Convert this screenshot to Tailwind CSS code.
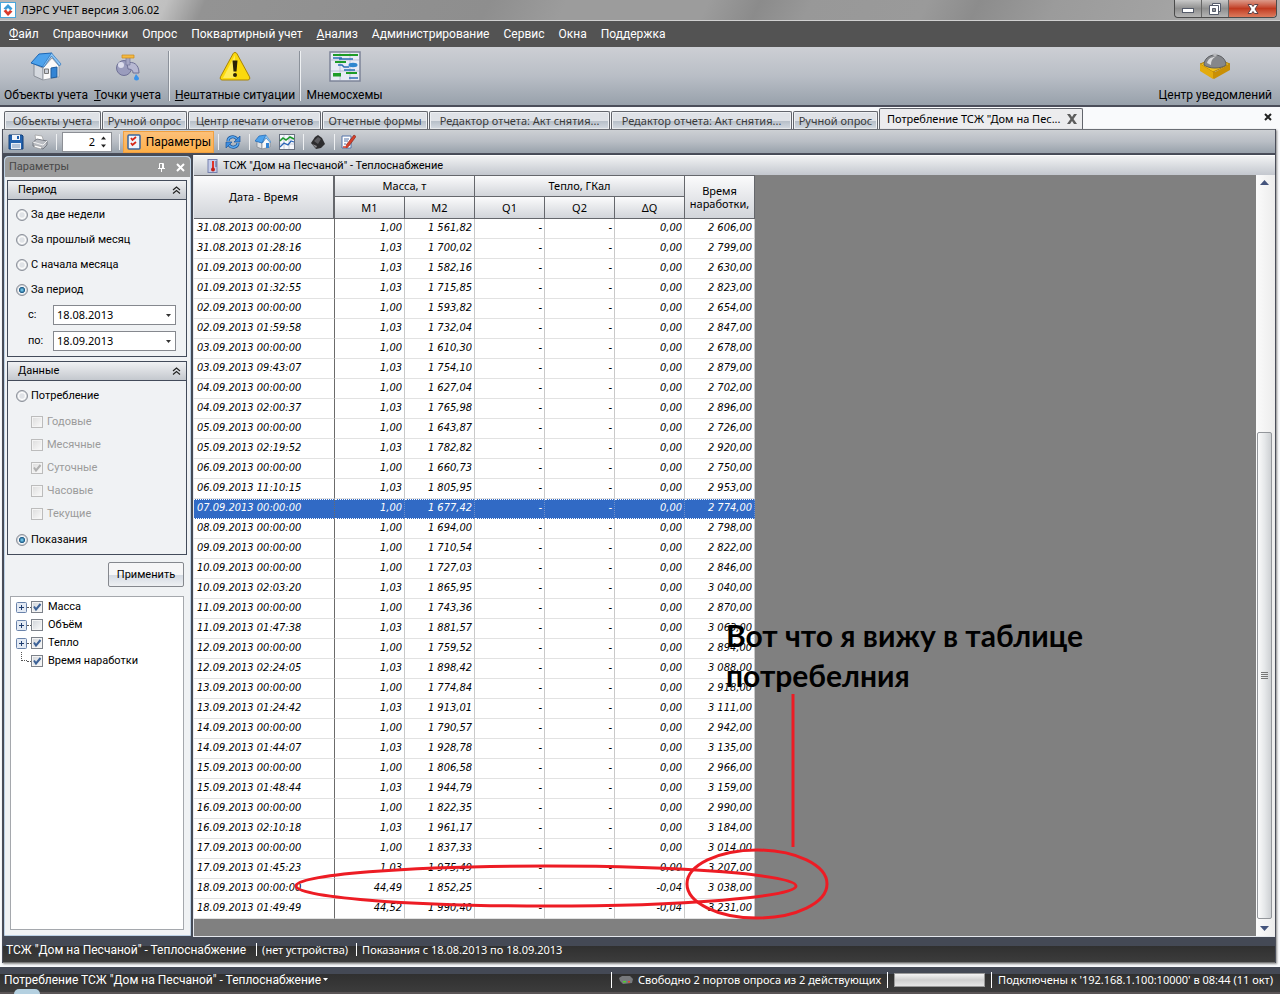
<!DOCTYPE html>
<html lang="ru">

<head>
    <meta charset="UTF-8">
    <meta name="viewport" content="width=device-width, initial-scale=1.0">
    <title>ЛЭРС УЧЕТ версия 3.06.02</title>
    <script src="https://cdn.jsdelivr.net/npm/@tailwindcss/browser@4"></script>
    <style>
        /* Classic desktop radio buttons and tick boxes */
        input[type="radio"] {
            appearance: none;
            flex: none;
            width: 12px;
            height: 12px;
            border: 1px solid #8b9099;
            border-radius: 50%;
            background: radial-gradient(circle, #e0e3e7 0 30%, #fdfdfd 50%, #c9cdd2 70%);
        }

        input[type="radio"]:checked {
            background: radial-gradient(circle, #6fc3e6 0 8%, #1d5c88 38%, #f4f6f8 50%, #c9cdd2 70%);
        }

        .tick {
            appearance: none;
            grid-area: 1 / 1;
            width: 12px;
            height: 12px;
            border: 1px solid #7d828a;
            background: linear-gradient(135deg, #cfd3d8, #fbfbfb);
            box-shadow: inset 0 0 0 1px #f4f4f4;
        }

        .tick:disabled {
            border-color: #bcbcbc;
            background: linear-gradient(135deg, #dcdcdc, #fbfbfb);
        }

        .tick + svg {
            grid-area: 1 / 1;
            display: none;
            pointer-events: none;
        }

        .tick:checked + svg {
            display: block;
        }
    </style>
</head>

<body class="bg-[#f9fafc] text-black text-[11px] leading-4 font-['Noto_Sans','Liberation_Sans',sans-serif]">
    <div class="min-h-screen flex flex-col">

        <!-- Title bar -->
        <header class="h-[21px] flex items-center border-b border-[#d0d0d0] bg-[linear-gradient(115deg,#b4b4b4_0%,#c6c6c6_10%,#c0c0c0_13%,#939393_16%,#8e8e8e_38%,#9c9c9c_44%,#9c9c9c_55%,#8b8b8b_59%,#989898_63%,#9a9a9a_72%,#8c8c8c_76%,#9b9b9b_82%,#a2a2a2_90%,#b0b0b0_100%)]">
            <svg class="w-4 h-4 shrink-0" viewBox="0 0 16 16">
                <rect x=".5" y=".5" width="15" height="15" fill="#fff" stroke="#4aa6dc" />
                <path d="M8 2l4.500 4.500-2 2L8 6 6 8 3.500 6.500z" fill="#3a9bd8" />
                <path d="M3.500 9L6 7.500 8 10l2-2 2.500 1.500L8 14z" fill="#d93a2b" />
            </svg>
            <h1 class="ml-[5px]">ЛЭРС УЧЕТ версия 3.06.02</h1>
            <div class="ml-auto mr-[3px] self-start flex h-[18px] rounded-b border border-t-0 border-[#4b4b4b]">
                <button aria-label="Свернуть" class="w-[27px] flex items-center justify-center border-r border-[#666] rounded-bl bg-linear-to-b from-[#c9c9c9] via-[#8f8f8f] to-[#b5b5b5]">
                    <svg class="w-3 h-3" viewBox="0 0 12 12"><rect x=".5" y="5.500" width="11" height="4" fill="#fff" stroke="#555b6a" /></svg>
                </button>
                <button aria-label="Восстановить" class="w-[27px] flex items-center justify-center border-r border-[#666] bg-linear-to-b from-[#c9c9c9] via-[#8f8f8f] to-[#b5b5b5]">
                    <svg class="w-3 h-3" viewBox="0 0 12 12">
                        <path d="M3.500 .5h8v8h-8z" fill="#fff" stroke="#555b6a" />
                        <path d="M.5 2.500h9v9h-9z" fill="#fff" stroke="#555b6a" />
                        <path d="M3.500 5.500h3v3h-3z" fill="#999" stroke="#555b6a" />
                    </svg>
                </button>
                <button aria-label="Закрыть" class="w-[47px] flex items-center justify-center rounded-br bg-linear-to-b from-[#dc9a8a] via-[#c03a20] to-[#dd7a5c]">
                    <svg class="w-3 h-3" viewBox="0 0 12 12">
                        <path d="M1 1.500h3.500L6 3.500l1.500-2H11L8 6l3 4.500H7.500L6 8.500l-1.500 2H1L4 6z" fill="#fff" stroke="#5b4148" />
                    </svg>
                </button>
            </div>
        </header>

        <!-- Menu -->
        <nav class="h-[26px] pl-[9px] flex items-center gap-[14px] bg-[#535353] text-white font-[Roboto] text-[12px]">
            <a href="#"><u>Ф</u>айл</a>
            <a href="#">Справочники</a>
            <a href="#">Опрос</a>
            <a href="#">Поквартирный учет</a>
            <a href="#"><u>А</u>нализ</a>
            <a href="#">Администрирование</a>
            <a href="#">Сервис</a>
            <a href="#">Окна</a>
            <a href="#">Поддержка</a>
        </nav>

        <!-- Large toolbar -->
        <div class="h-[60px] flex items-stretch border-b-2 border-[#4b4e5a] bg-linear-to-b from-[#cdcfd4] via-[#b9bec6] to-[#98a1ab] font-[Roboto] text-[12px] whitespace-nowrap">
            <button class="w-[92px] flex flex-col items-center gap-1 pt-1">
                <svg class="w-8 h-8" viewBox="0 0 32 32">
                    <path d="M4 13l9 4v12l-9-4z" fill="#d5d9df" stroke="#8a8f98" />
                    <path d="M13 17l9-10 7 8v11l-16 3z" fill="#fafafa" stroke="#9aa0a8" />
                    <path d="M1 12L9 3l13-1-9 14z" fill="#4da2ec" stroke="#1c66b4" />
                    <path d="M21.500 2l9.500 11-1.500 2-8-10L14 16l-1.500-.5z" fill="#8cc6f6" stroke="#2d74bb" stroke-width=".7" />
                    <path d="M21 17l6-1v10l-6 1z" fill="#3384d4" stroke="#1e5c9d" />
                    <path d="M14.500 18h4v4.500h-4z" fill="#c9ced6" stroke="#777" />
                </svg>
                <span>Объекты учета</span>
            </button>
            <button class="w-[71px] flex flex-col items-center gap-1 pt-1">
                <svg class="w-8 h-8" viewBox="0 0 32 32">
                    <circle cx="12" cy="17" r="7.500" fill="#9a9cbd" stroke="#6f7196" />
                    <circle cx="9" cy="14" r="3" fill="#dcddec" />
                    <path d="M15 12c6-2 12 1 12 10h-6c0-3-2-4-5-4z" fill="#b7b8d2" stroke="#6f7196" />
                    <path d="M14 6h4v8h-4z" fill="#a5a6c4" stroke="#73759b" stroke-width=".7" />
                    <path d="M10 4h12v3H10z" fill="#f4b942" stroke="#c98a1a" stroke-width=".7" />
                    <path d="M24 23l3 4a2.500 2.500 0 1 1-5 0z" fill="#3b93ea" />
                </svg>
                <span><u>Т</u>очки учета</span>
            </button>
            <i class="my-1 w-px mx-[6px] bg-[#eef0f2] shadow-[-1px_0_0_#8b919a]"></i>
            <button class="w-[118px] flex flex-col items-center gap-1 pt-1">
                <svg class="w-8 h-8" viewBox="0 0 32 32">
                    <path d="M16 1.500c1 0 1.600.5 2 1.300l12.500 23c.8 1.700 0 3.200-1.700 3.200H3.200C1.500 29 .7 27.500 1.500 25.800L14 2.800c.4-.8 1-1.300 2-1.300z" fill="#fbd90d" stroke="#a88306" />
                    <path d="M16 4L4 27h12z" fill="#fff27a" opacity=".7" />
                    <path d="M13.500 9.500h5l-1 11h-3z" fill="#2b2205" />
                    <circle cx="16" cy="24" r="2" fill="#2b2205" />
                </svg>
                <span><u>Н</u>ештатные ситуации</span>
            </button>
            <i class="my-1 w-px mx-[6px] bg-[#eef0f2] shadow-[-1px_0_0_#8b919a]"></i>
            <button class="w-[75px] flex flex-col items-center gap-1 pt-1">
                <svg class="w-8 h-8" viewBox="0 0 32 32">
                    <rect x="1" y="1" width="30" height="29" fill="#e8ebf5" stroke="#7d8498" stroke-width="1.500" />
                    <path d="M11 2v27M21 2v27M2 9h28M2 20h28" stroke="#bcc3d8" />
                    <path d="M4 4h25M6 11h11M17 22h11" stroke="#1e9c28" stroke-width="2" />
                    <path d="M4 7h9M10 8h14M9 14h4l2 2h5M15 19h11" fill="none" stroke="#2c6fb4" stroke-width="1.500" />
                    <ellipse cx="24" cy="14" rx="4.500" ry="2.200" fill="#2f86cf" />
                    <rect x="4" y="22" width="8" height="3.500" fill="#1e9c28" />
                    <path d="M20 27h9" stroke="#2c6fb4" stroke-width="1.500" />
                </svg>
                <span>Мнемосхемы</span>
            </button>
            <button class="ml-auto mr-2 flex flex-col items-center gap-1 pt-1">
                <svg class="w-8 h-8" viewBox="0 0 32 32">
                    <path d="M1 13l15 8 15-8v6l-16 9-14-9z" fill="#c98f06" />
                    <path d="M1 13l15-6 15 6-17 8z" fill="#f2c21b" stroke="#b58409" />
                    <path d="M1 13v7l13 8v-7z" fill="#e3ab0d" />
                    <path d="M5 14c0-6 5-10 11-10s11 4 11 10c-5 4-17 4-22 0z" fill="#85878b" stroke="#5c5e62" />
                    <path d="M8 12c1-4 4-6 8-6-3 2-4 4-4 8z" fill="#d9dadc" />
                    <circle cx="16" cy="4" r="1.800" fill="#b9babd" />
                </svg>
                <span>Центр уведомлений</span>
            </button>
        </div>

        <!-- Document tabs -->
        <div class="h-[22px] px-1 flex items-end whitespace-nowrap">
            <div id="tabs" class="flex items-end"></div>
            <div class="w-[204px] h-[21px] pl-[7px] pr-1 flex items-center justify-between border border-b-0 border-[#62656c] rounded-t-xs bg-[#ececee]">
                <span>Потребление ТСЖ "Дом на Пес...</span>
                <button aria-label="Закрыть вкладку">
                    <svg class="w-3 h-3" viewBox="0 0 12 12"><path d="M1 1h3l2 3 2-3h3L7.500 6l3.500 5H8L6 8l-2 3H1l3.500-5z" fill="#5d5d5d" /></svg>
                </button>
            </div>
            <button class="ml-auto mr-1 mb-2" aria-label="Закрыть документ">
                <svg class="w-2 h-2" viewBox="0 0 8 8"><path d="M1 1l6 6M7 1L1 7" stroke="#222" stroke-width="2" /></svg>
            </button>
        </div>

        <!-- Document window -->
        <main class="flex-1 ml-[2px] mr-1 flex flex-col border-x border-[#4b4e5a] bg-[#454b57] shadow-[1px_1px_2px_#888]">

            <div class="h-[25px] px-[5px] flex items-center border-y border-t-[#6b6e75] border-b-[#4b4e5a] bg-linear-to-b from-[#cdd0d4] via-[#b9bec5] to-[#98a1ab]">
                <button aria-label="Сохранить" class="mr-2">
                    <svg class="w-4 h-4" viewBox="0 0 16 16">
                        <path d="M1 1h13l1 1v13H1z" fill="#2362ae" stroke="#123f78" />
                        <path d="M4 1h8v5H4z" fill="#f4f6fa" /><path d="M9 2h2v3H9z" fill="#2362ae" />
                        <path d="M3 9h10v6H3z" fill="#e9eef6" /><path d="M4 11h8M4 13h8" stroke="#7d97bb" />
                    </svg>
                </button>
                <button aria-label="Печать" class="mr-2">
                    <svg class="w-4 h-4" viewBox="0 0 16 16">
                        <path d="M3 1l7 1 2 6-8-1z" fill="#fff" stroke="#999" stroke-width=".7" />
                        <path d="M1 8l4-3 10 2v4l-4 4-10-3z" fill="#b9bcc2" stroke="#666a72" stroke-width=".8" />
                        <path d="M1 8l10 3 4-4" fill="none" stroke="#f3f3f3" />
                        <path d="M3 11l7 2-1 2-7-2z" fill="#fff" stroke="#888" stroke-width=".5" />
                    </svg>
                </button>
                <i class="h-4 w-px mr-[5px] bg-[#eef0f2]"></i>
                <div class="w-[50px] h-5 mr-[7px] flex border border-[#8c8f95] bg-white">
                    <input type="text" value="2" aria-label="Масштаб" class="w-8 text-right outline-none">
                    <span class="flex-1 flex flex-col justify-center items-center gap-1">
                        <button aria-label="Больше" class="flex"><svg class="w-[5px] h-1" viewBox="0 0 5 4"><path d="M0 3.500h5L2.500 .5z" fill="#222" /></svg></button>
                        <button aria-label="Меньше" class="flex"><svg class="w-[5px] h-1" viewBox="0 0 5 4"><path d="M0 .5h5L2.500 3.500z" fill="#222" /></svg></button>
                    </span>
                </div>
                <i class="h-4 w-px mr-[3px] bg-[#eef0f2]"></i>
                <button class="w-[91px] h-[22px] mr-1 flex items-center justify-center gap-1 border border-[#f0a040] bg-linear-to-b from-[#fcc078] to-[#fdaf47] font-[Roboto] text-[12px]">
                    <svg class="w-4 h-4" viewBox="0 0 16 16">
                        <rect x="2" y="1" width="12" height="14" rx="1" fill="#eef4fc" stroke="#39669f" stroke-width="1.500" />
                        <path d="M5 4l1.500 2L10 3M5 9l1.500 2L10 8" fill="none" stroke="#d62718" stroke-width="1.800" />
                    </svg>
                    Параметры
                </button>
                <i class="h-4 w-px mr-[6px] bg-[#eef0f2]"></i>
                <button aria-label="Обновить" class="mr-2">
                    <svg class="w-4 h-4" viewBox="0 0 16 16" fill="none">
                        <path d="M3 7c0-4 6-6 9-2" stroke="#1b5599" stroke-width="3" /><path d="M3 7c0-4 6-6 9-2" stroke="#5aa9f0" stroke-width="1.500" />
                        <path d="M15 2v6H9z" fill="#3c8ee2" stroke="#1b5599" stroke-width=".7" />
                        <path d="M13 9c0 4-6 6-9 2" stroke="#1b5599" stroke-width="3" /><path d="M13 9c0 4-6 6-9 2" stroke="#5aa9f0" stroke-width="1.500" />
                        <path d="M1 14V8h6z" fill="#3c8ee2" stroke="#1b5599" stroke-width=".7" />
                    </svg>
                </button>
                <i class="h-4 w-px mr-[5px] bg-[#eef0f2]"></i>
                <button aria-label="Объект" class="mr-2">
                    <svg class="w-4 h-4" viewBox="0 0 16 16">
                        <path d="M2 7l5 2v6l-5-2z" fill="#dfe2e6" stroke="#7d838b" stroke-width=".7" />
                        <path d="M7 9l4-5 4 4v5l-8 2z" fill="#fafafa" stroke="#7d838b" stroke-width=".7" />
                        <path d="M0 7l4-5 7-1-4 8z" fill="#4da2ec" stroke="#1c66b4" stroke-width=".7" />
                        <path d="M11 1l5 7-1 .5L11 4 7.500 9z" fill="#8cc6f6" stroke="#2d74bb" stroke-width=".4" />
                        <path d="M11 9h3v5h-3z" fill="#3384d4" />
                    </svg>
                </button>
                <button aria-label="График" class="mr-2">
                    <svg class="w-4 h-4" viewBox="0 0 16 16">
                        <rect x=".5" y=".5" width="15" height="15" fill="#f6f8fc" stroke="#68707f" />
                        <path d="M1 5h14M1 10h14M5 1v14M10 1v14" stroke="#b7bfd0" stroke-width=".8" />
                        <path d="M1 7l3-3 3 2 4-3 4 2" fill="none" stroke="#1b9a2a" stroke-width="1.500" />
                        <path d="M1 13l4-4 4 2 3-4 3 1" fill="none" stroke="#2a65b8" stroke-width="1.300" />
                    </svg>
                </button>
                <i class="h-4 w-px mr-[6px] bg-[#eef0f2]"></i>
                <button aria-label="Прибор" class="mr-2">
                    <svg class="w-4 h-4" viewBox="0 0 16 16">
                        <path d="M1 9l4-6 3-2 4 3 3 6-4 4-5 1z" fill="#2d2d2f" />
                        <path d="M4 7l4-4 3 2-3 5z" fill="#5b5b5f" /><path d="M2 10l5 2-1 2z" fill="#8a8a8f" />
                    </svg>
                </button>
                <i class="h-4 w-px mr-[5px] bg-[#eef0f2]"></i>
                <button aria-label="Изменить">
                    <svg class="w-4 h-4" viewBox="0 0 16 16">
                        <path d="M2 2h9v12H2z" fill="#fff" stroke="#5273a8" />
                        <path d="M4 5h5M4 7h4M4 10h2" stroke="#5273a8" />
                        <path d="M14 1l2 1.500L9 12l-3 2 .5-3.500z" fill="#d8402b" stroke="#7c2215" stroke-width=".6" />
                        <path d="M3 13h5" stroke="#d8402b" stroke-width="1.500" />
                    </svg>
                </button>
            </div>

            <div class="flex-1 flex pt-px">
                <!-- Parameters panel -->
                <aside class="w-[187px] shrink-0 mt-px mb-px ml-px flex flex-col border border-[#bcd0e4] rounded-t bg-[#f0f2f4] font-[Roboto]">
                    <div class="h-[20px] shrink-0 pl-1 pr-[5px] flex items-center rounded-t bg-[#9a9b9b] text-[#484848]">
                        <h2>Параметры</h2>
                        <button class="ml-auto mr-[10px]" aria-label="Закрепить">
                            <svg class="w-[9px] h-[9px]" viewBox="0 0 9 9"><path d="M2.500 .5h4v4.500M2.500 .5v4.500M5.500 1v4M1 5.500h7M4.500 6v3" fill="none" stroke="#fff" /></svg>
                        </button>
                        <button aria-label="Закрыть панель">
                            <svg class="w-[9px] h-[9px]" viewBox="0 0 9 9"><path d="M1 1l7 7M8 1L1 8" stroke="#fff" stroke-width="2" /></svg>
                        </button>
                    </div>

                    <section class="mt-[3px] ml-[2px] mr-[3px] h-[177px] shrink-0 border border-[#434b5a]">
                        <h3 class="h-[19px] pl-[10px] pr-[5px] flex items-center justify-between border-b border-[#434b5a] bg-linear-to-b from-[#f0f1f3] to-[#c4c8ce]">Период
                            <svg class="w-[9px] h-2" viewBox="0 0 9 8"><path d="M1 4l3.500-3L8 4M1 7.500l3.500-3 3.500 3" fill="none" stroke="#222" stroke-width="1.200" /></svg>
                        </h3>
                        <div class="pl-2 pt-[7px] flex flex-col gap-[9px]">
                            <label class="flex items-center gap-[3px]"><input type="radio" name="period">За две недели</label>
                            <label class="flex items-center gap-[3px]"><input type="radio" name="period">За прошлый месяц</label>
                            <label class="flex items-center gap-[3px]"><input type="radio" name="period">С начала месяца</label>
                            <label class="flex items-center gap-[3px]"><input type="radio" name="period" checked>За период</label>
                        </div>
                        <div class="pl-5 pr-[10px] pt-[7px] flex flex-col gap-[6px]">
                            <div class="flex items-center">
                                <label for="from" class="w-[25px]">с:</label>
                                <div class="flex-1 h-5 flex items-center border border-[#85888e] bg-white font-['Noto_Sans']">
                                    <input id="from" type="text" value="18.08.2013" class="w-0 flex-1 pl-[3px] outline-none">
                                    <button class="px-1" aria-label="Календарь"><svg class="w-[5px] h-[3px]" viewBox="0 0 5 3"><path d="M0 0h5L2.500 3z" fill="#333" /></svg></button>
                                </div>
                            </div>
                            <div class="flex items-center">
                                <label for="to" class="w-[25px]">по:</label>
                                <div class="flex-1 h-5 flex items-center border border-[#85888e] bg-white font-['Noto_Sans']">
                                    <input id="to" type="text" value="18.09.2013" class="w-0 flex-1 pl-[3px] outline-none">
                                    <button class="px-1" aria-label="Календарь"><svg class="w-[5px] h-[3px]" viewBox="0 0 5 3"><path d="M0 0h5L2.500 3z" fill="#333" /></svg></button>
                                </div>
                            </div>
                        </div>
                    </section>

                    <section class="mt-1 ml-[2px] mr-[3px] h-[194px] shrink-0 border border-[#434b5a]">
                        <h3 class="h-[19px] pl-[10px] pr-[5px] flex items-center justify-between border-b border-[#434b5a] bg-linear-to-b from-[#f0f1f3] to-[#c4c8ce]">Данные
                            <svg class="w-[9px] h-2" viewBox="0 0 9 8"><path d="M1 4l3.500-3L8 4M1 7.500l3.500-3 3.500 3" fill="none" stroke="#222" stroke-width="1.200" /></svg>
                        </h3>
                        <div class="pl-2 pt-[7px]">
                            <label class="flex items-center gap-[3px]"><input type="radio" name="data">Потребление</label>
                            <div id="intervals" class="pl-[15px] py-[10px] flex flex-col gap-[7px] text-[#9b9b9b]"></div>
                            <label class="flex items-center gap-[3px]"><input type="radio" name="data" checked>Показания</label>
                        </div>
                    </section>

                    <button class="self-end mt-[7px] mr-[6px] w-[76px] h-[25px] shrink-0 border border-[#85888e] rounded-xs bg-linear-to-b from-[#f6f6f7] from-50% via-[#d3d9e2] via-50% to-[#eef0f3]">Применить</button>

                    <ul id="tree" class="flex-1 mt-[9px] ml-[5px] mr-[6px] mb-[5px] pt-px pl-[5px] border border-[#a5a8ad] bg-white"></ul>
                </aside>

                <!-- Report -->
                <section class="flex-1 min-w-0 ml-[2px] flex flex-col border-l border-b border-[#e6e9ee]">
                    <h2 class="h-5 pl-[13px] flex items-center gap-1 border-t border-white bg-linear-to-b from-[#f2f3f4] to-[#c3c7ce] font-[Roboto]">
                        <svg class="w-3 h-[14px]" viewBox="0 0 12 14">
                            <rect x="1" y=".5" width="9" height="13" fill="#c4cbe8" stroke="#7681ad" />
                            <path d="M5 2h2v7H5z" fill="#e03427" /><circle cx="6" cy="10.500" r="2" fill="#c31f17" />
                            <path d="M8 3h2M8 5h2M8 7h2" stroke="#555f88" />
                        </svg>
                        ТСЖ "Дом на Песчаной" - Теплоснабжение
                    </h2>
                    <div class="flex-1 flex bg-[#808080]">
                        <div class="relative flex-1 min-w-0">
                            <table class="w-[561px] table-fixed border-separate border-spacing-0 bg-white">
                                <colgroup>
                                    <col class="w-[141px]">
                                    <col span="6" class="w-[70px]">
                                </colgroup>
                                <thead>
                                    <tr class="h-[22px]">
                                        <th rowspan="2" class="p-0 font-normal border border-l-0 border-r-2 border-[#65676c] bg-linear-to-b from-[#fbfbfc] to-[#d2d5da]">Дата - Время</th>
                                        <th colspan="2" class="p-0 font-normal border border-l-0 border-[#65676c] bg-linear-to-b from-[#fbfbfc] to-[#d2d5da]">Масса, т</th>
                                        <th colspan="3" class="p-0 font-normal border border-l-0 border-[#65676c] bg-linear-to-b from-[#fbfbfc] to-[#d2d5da]">Тепло, ГКал</th>
                                        <th rowspan="2" class="p-0 font-normal leading-[13px] border border-l-0 border-[#65676c] bg-linear-to-b from-[#fbfbfc] to-[#d2d5da]">Время<br>наработки,</th>
                                    </tr>
                                    <tr class="h-[22px]">
                                        <th class="p-0 font-normal border-r border-b border-[#65676c] bg-linear-to-b from-[#fbfbfc] to-[#d2d5da]">M1</th>
                                        <th class="p-0 font-normal border-r border-b border-[#65676c] bg-linear-to-b from-[#fbfbfc] to-[#d2d5da]">M2</th>
                                        <th class="p-0 font-normal border-r border-b border-[#65676c] bg-linear-to-b from-[#fbfbfc] to-[#d2d5da]">Q1</th>
                                        <th class="p-0 font-normal border-r border-b border-[#65676c] bg-linear-to-b from-[#fbfbfc] to-[#d2d5da]">Q2</th>
                                        <th class="p-0 font-normal border-r border-b border-[#65676c] bg-linear-to-b from-[#fbfbfc] to-[#d2d5da]">ΔQ</th>
                                    </tr>
                                </thead>
                                <tbody id="rows" class="italic text-right font-['DejaVu_Sans_Condensed','Noto_Sans',sans-serif]"></tbody>
                            </table>

                            <!-- Hand-made notes over the table -->
                            <p class="absolute left-[532px] top-[440px] w-[400px] font-[Lato] font-bold text-[30px] leading-10">Вот что я вижу в таблице потребелния</p>
                            <svg class="absolute left-0 top-0 w-[700px] h-[760px] pointer-events-none" viewBox="194 175 700 760" fill="none" stroke="#ed1c24" stroke-width="3">
                                <path d="M793 694v153" />
                                <ellipse cx="546" cy="886" rx="250" ry="20" />
                                <ellipse cx="757" cy="884" rx="70" ry="34" />
                            </svg>
                        </div>
                        <div class="w-[19px] py-[5px] pr-[2px] flex flex-col items-center bg-linear-to-r from-[#fbfbfb] to-[#ececec]">
                            <button aria-label="Вверх"><svg class="w-[9px] h-[5px]" viewBox="0 0 9 5"><path d="M0 5h9L4.500 0z" fill="#44547c" /></svg></button>
                            <div class="flex-1 w-[15px] my-[7px] flex flex-col justify-end">
                                <div class="h-[67%] flex flex-col items-center justify-center gap-px border border-[#93969b] rounded-xs bg-linear-to-r from-[#fafafa] via-[#e6e8ea] to-[#cdd0d3]">
                                    <i class="w-[7px] h-px bg-[#777]"></i>
                                    <i class="w-[7px] h-px bg-[#777]"></i>
                                    <i class="w-[7px] h-px bg-[#777]"></i>
                                    <i class="w-[7px] h-px bg-[#777]"></i>
                                </div>
                            </div>
                            <button aria-label="Вниз"><svg class="w-[9px] h-[5px]" viewBox="0 0 9 5"><path d="M0 0h9L4.500 5z" fill="#44547c" /></svg></button>
                        </div>
                    </div>
                </section>
            </div>

            <div class="h-[26px] px-[3px] flex items-center border-b border-[#777] bg-linear-to-b from-[#444955] from-35% via-[#303030] via-35% to-[#3c3c3c] text-white">
                <span class="font-[Roboto] text-[12px]">ТСЖ "Дом на Песчаной" - Теплоснабжение</span>
                <i class="ml-[10px] mr-[5px] w-px h-[13px] bg-white"></i>
                <span>(нет устройства)</span>
                <i class="ml-2 mr-[5px] w-px h-[13px] bg-white"></i>
                <span>Показания с 18.08.2013 по 18.09.2013</span>
            </div>
        </main>

        <!-- Application status bar -->
        <footer class="relative mt-1 h-[27px] pl-1 pr-[7px] flex items-center bg-linear-to-b from-[#444955] from-30% via-[#303030] via-30% to-[#3c3c3c] border-b-2 border-[#5a5556] text-white whitespace-nowrap">
            <button class="flex items-center gap-[2px] font-[Roboto] text-[12px]">Потребление ТСЖ "Дом на Песчаной" - Теплоснабжение
                <svg class="w-[5px] h-[3px]" viewBox="0 0 5 3"><path d="M0 0h5L2.500 3z" fill="#fff" /></svg>
            </button>
            <i class="ml-auto mr-[7px] w-px h-4 bg-white"></i>
            <svg class="w-[14px] h-2 mr-[5px]" viewBox="0 0 14 8">
                <path d="M0 2l3-2h8l3 3-1 4-9 1-3-3z" fill="#77797c" />
                <path d="M4 5h3v1.500H4z" fill="#4fd02f" /><path d="M9 5h2v1.500H9z" fill="#e04a2b" />
            </svg>
            <span>Свободно 2 портов опроса из 2 действующих</span>
            <i class="mx-[6px] w-px h-4 bg-white"></i>
            <div class="w-[91px] h-[14px] border border-[#9a9a9a] bg-linear-to-b from-[#f4f4f4] via-[#cfcfcf] to-[#e6e6e6]"></div>
            <i class="mx-[6px] w-px h-4 bg-white"></i>
            <span>Подключены к '192.168.1.100:10000' в 08:44 (11 окт)</span>
            <i class="absolute left-[14px] -bottom-[2px] w-[26px] h-[5px] rounded-t-full bg-[#b4d0e0]"></i>
        </footer>
    </div>

    <script>
        const tabs = [
            ['Объекты учета', 'w-[97px]'],
            ['Ручной опрос', 'w-[85px]'],
            ['Центр печати отчетов', 'w-[133px]'],
            ['Отчетные формы', 'w-[106px]'],
            ['Редактор отчета: Акт снятия...', 'w-[181px]'],
            ['Редактор отчета: Акт снятия...', 'w-[181px]'],
            ['Ручной опрос', 'w-[85px]'],
        ];
        const intervals = ['Годовые', 'Месячные', 'Суточные', 'Часовые', 'Текущие'];
        const tree = [['Масса', true, true], ['Объём', false, true], ['Тепло', true, true], ['Время наработки', true, false]];

        // date and time | M1 | M2 | dQ | hours
        const readings = `31.08.2013 00:00:00|1,00|1 561,82|0,00|2 606,00
31.08.2013 01:28:16|1,03|1 700,02|0,00|2 799,00
01.09.2013 00:00:00|1,03|1 582,16|0,00|2 630,00
01.09.2013 01:32:55|1,03|1 715,85|0,00|2 823,00
02.09.2013 00:00:00|1,00|1 593,82|0,00|2 654,00
02.09.2013 01:59:58|1,03|1 732,04|0,00|2 847,00
03.09.2013 00:00:00|1,00|1 610,30|0,00|2 678,00
03.09.2013 09:43:07|1,03|1 754,10|0,00|2 879,00
04.09.2013 00:00:00|1,00|1 627,04|0,00|2 702,00
04.09.2013 02:00:37|1,03|1 765,98|0,00|2 896,00
05.09.2013 00:00:00|1,00|1 643,87|0,00|2 726,00
05.09.2013 02:19:52|1,03|1 782,82|0,00|2 920,00
06.09.2013 00:00:00|1,00|1 660,73|0,00|2 750,00
06.09.2013 11:10:15|1,03|1 805,95|0,00|2 953,00
07.09.2013 00:00:00|1,00|1 677,42|0,00|2 774,00
08.09.2013 00:00:00|1,00|1 694,00|0,00|2 798,00
09.09.2013 00:00:00|1,00|1 710,54|0,00|2 822,00
10.09.2013 00:00:00|1,00|1 727,03|0,00|2 846,00
10.09.2013 02:03:20|1,03|1 865,95|0,00|3 040,00
11.09.2013 00:00:00|1,00|1 743,36|0,00|2 870,00
11.09.2013 01:47:38|1,03|1 881,57|0,00|3 063,00
12.09.2013 00:00:00|1,00|1 759,52|0,00|2 894,00
12.09.2013 02:24:05|1,03|1 898,42|0,00|3 088,00
13.09.2013 00:00:00|1,00|1 774,84|0,00|2 918,00
13.09.2013 01:24:42|1,03|1 913,01|0,00|3 111,00
14.09.2013 00:00:00|1,00|1 790,57|0,00|2 942,00
14.09.2013 01:44:07|1,03|1 928,78|0,00|3 135,00
15.09.2013 00:00:00|1,00|1 806,58|0,00|2 966,00
15.09.2013 01:48:44|1,03|1 944,79|0,00|3 159,00
16.09.2013 00:00:00|1,00|1 822,35|0,00|2 990,00
16.09.2013 02:10:18|1,03|1 961,17|0,00|3 184,00
17.09.2013 00:00:00|1,00|1 837,33|0,00|3 014,00
17.09.2013 01:45:23|1,03|1 975,49|0,00|3 207,00
18.09.2013 00:00:00|44,49|1 852,25|-0,04|3 038,00
18.09.2013 01:49:49|44,52|1 990,40|-0,04|3 231,00`.split('\n').map(line => line.split('|'));

        const tickMark = (color) => `<svg class="w-3 h-3" viewBox="0 0 12 12"><path d="M3 5.500l2 3L9.500 3" fill="none" stroke="${color}" stroke-width="2" /></svg>`;

        document.getElementById('tabs').innerHTML = tabs.map(([title, width]) => `
            <button class="${width} mr-px h-[18px] flex items-center justify-center border border-b-0 border-[#62656c] rounded-t-xs shadow-[inset_0_0_0_1px_#eef0f3] bg-linear-to-b from-[#dfe2e7] from-50% via-[#b4bcc6] via-50% to-[#d5dbe2] text-[#3a3a3a]">${title}</button>`).join('');

        document.getElementById('intervals').innerHTML = intervals.map((name, i) => `
            <label class="flex items-center gap-1"><span class="inline-grid"><input type="checkbox" class="tick" disabled ${i === 2 ? 'checked' : ''}>${tickMark('#b0b0b0')}</span>${name}</label>`).join('');

        document.getElementById('tree').innerHTML = tree.map(([name, checked, branch], i) => `
            <li class="h-[18px] flex items-center">
                ${branch
                ? `<button class="w-[11px] h-[11px]" aria-label="Развернуть ${name}"><svg class="w-[11px] h-[11px]" viewBox="0 0 11 11"><rect x=".5" y=".5" width="10" height="10" rx="1" fill="#e3eaf4" stroke="#6a83ab" /><path d="M3 5.500h5M5.500 3v5" stroke="#1f3d70" /></svg></button>`
                : `<i class="self-start w-[6px] h-[9px] ml-[5px] border-l border-b border-dotted border-[#555]"></i>`}
                <i class="w-[4px] border-t border-dotted border-[#555]"></i>
                <label class="flex items-center gap-[5px]"><span class="inline-grid"><input type="checkbox" class="tick" ${checked ? 'checked' : ''}>${tickMark('#3d6297')}</span>${name}</label>
            </li>`).join('');

        document.getElementById('rows').innerHTML = readings.map(([date, m1, m2, dq, hours], i) => {
            const selected = i === 14;
            const cell = selected ? 'p-0 pr-[2px] pb-[2px] border-r border-y border-dotted border-y-white border-r-[#6f8fc8]' : 'p-0 pr-[2px] pb-px border-r border-b border-r-[#c9c9c9] border-b-[#e2e2e2]';
            const first = selected ? 'p-0 pl-[3px] pb-[2px] text-left border-y border-r border-dotted border-y-white border-r-[#6b6b6b]' : 'p-0 pl-[3px] pb-px text-left border-r border-b border-r-[#6b6b6b] border-b-[#e2e2e2]';
            return `<tr class="h-5 leading-4 ${selected ? 'bg-[#316ac5] text-white' : ''}">
                <td class="${first}">${date}</td><td class="${cell}">${m1}</td><td class="${cell}">${m2}</td><td class="${cell}">-</td><td class="${cell}">-</td><td class="${cell}">${dq}</td><td class="${cell}">${hours}</td></tr>`;
        }).join('');
    </script>
</body>

</html>
